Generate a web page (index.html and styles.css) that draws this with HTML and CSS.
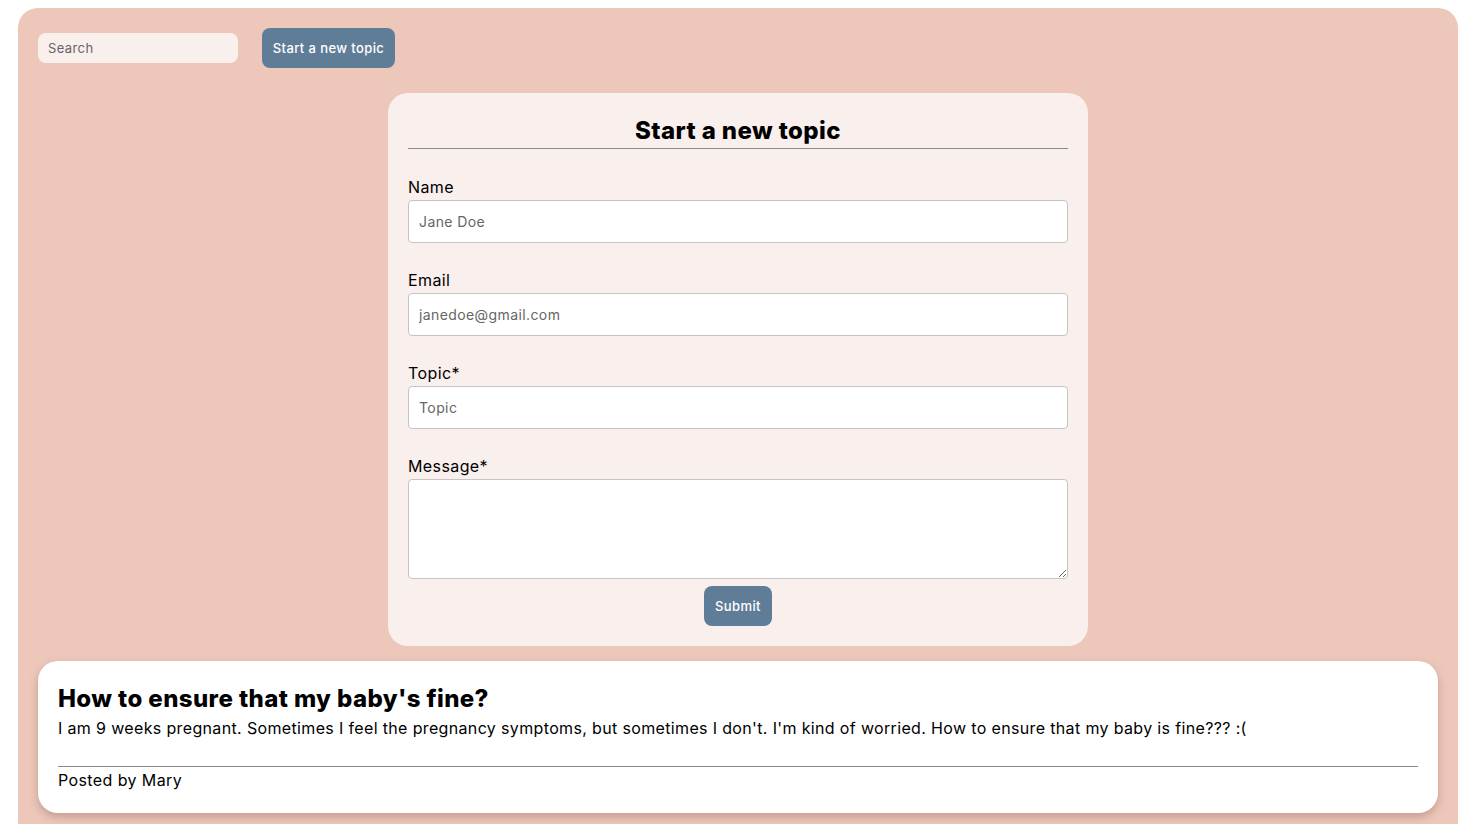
FILE: index.html
```html
<!DOCTYPE html>
<html lang="en">
<head>
<meta charset="utf-8">
<title>Forum</title>
<link rel="stylesheet" href="styles.css">
</head>
<body>
<div class="page">
  <div class="toolbar">
    <input class="search" type="text" placeholder="Search">
    <button class="btn btn-new">Start a new topic</button>
  </div>
  <form class="topic-form">
    <h2 class="form-title">Start a new topic</h2>
    <div class="field">
      <label class="label">Name</label>
      <input class="input" type="text" placeholder="Jane Doe">
    </div>
    <div class="field">
      <label class="label">Email</label>
      <input class="input" type="text" placeholder="janedoe@gmail.com">
    </div>
    <div class="field">
      <label class="label">Topic*</label>
      <input class="input" type="text" placeholder="Topic">
    </div>
    <div class="field">
      <label class="label">Message*</label>
      <textarea class="textarea"></textarea>
    </div>
    <div class="submit-row">
      <button class="btn btn-submit" type="button">Submit</button>
    </div>
  </form>
  <div class="post">
    <h2 class="post-title">How to ensure that my baby's fine?</h2>
    <p class="post-body">I am 9 weeks pregnant. Sometimes I feel the pregnancy symptoms, but sometimes I don't. I'm kind of worried. How to ensure that my baby is fine??? :(</p>
    <div class="post-footer">Posted by Mary</div>
  </div>
</div>
</body>
</html>
```
FILE: styles.css
```css
* { box-sizing: border-box; }
body {
  margin: 8px;
  background: #ffffff;
  font-family: "Inter", "Open Sans", sans-serif;
  letter-spacing: 0.4px;
  color: #000;
}
.page {
  margin-left: 10px;
  width: 1440px;
  background: #edc7ba;
  border-radius: 20px;
  padding: 20px 20px 20px;
  min-height: 840px;
}
.toolbar {
  display: flex;
  align-items: center;
  gap: 24px;
}
.search {
  width: 200px;
  height: 30px;
  border: none;
  border-radius: 8px;
  background: #f9efec;
  padding: 0 10px 1px;
  font-family: inherit;
  letter-spacing: 0.4px;
  font-size: 13px;
  outline: none;
}
.search::placeholder { color: #666; }
.btn {
  background: #607d98;
  color: #fff;
  border: none;
  border-radius: 8px;
  height: 40px;
  padding: 0 8px;
  font-family: inherit;
  letter-spacing: 0.4px;
  font-size: 13px;
  font-weight: 500;
}
.btn-new { width: 133px; }
.topic-form {
  width: 700px;
  margin: 25px auto 0;
  background: #f9efec;
  border-radius: 20px;
  padding: 20px 20px 20px;
}
.form-title {
  margin: 0;
  text-align: center;
  font-size: 24px;
  font-weight: 800;
  line-height: 35px;
  border-bottom: 1px solid #8a8a8a;
}
.field {
  display: flex;
  flex-direction: column;
  margin-top: 25px;
}
.field:first-of-type { margin-top: 26px; }
.label {
  font-size: 16px;
  line-height: 24px;
  margin-bottom: 1px;
}
.input {
  height: 43px;
  border: 1px solid #c4c4c4;
  border-radius: 4px;
  background: #fff;
  padding: 0 10px 1px;
  font-family: inherit;
  letter-spacing: 0.4px;
  font-size: 14px;
}
.input::placeholder { color: #666; }
.textarea {
  height: 100px;
  border: 1px solid #c4c4c4;
  border-radius: 4px;
  background: #fff;
  font-family: inherit;
}
.submit-row {
  display: flex;
  justify-content: center;
  margin-top: 7px;
}
.btn-submit { width: 68px; }
.post {
  margin-top: 15px;
  background: #fff;
  border-radius: 20px;
  padding: 20px 20px 21px;
  box-shadow: 0 4px 8px rgba(120, 80, 70, 0.35);
}
.post-title {
  margin: 0;
  font-size: 24px;
  font-weight: 800;
  line-height: 35px;
}
.post-body {
  margin: 0;
  font-size: 16px;
  line-height: 24px;
  letter-spacing: 0.35px;
  padding-bottom: 26px;
  border-bottom: 1px solid #8a8a8a;
}
.post-footer {
  font-size: 16px;
  line-height: 24px;
  padding-top: 1px;
}
```
